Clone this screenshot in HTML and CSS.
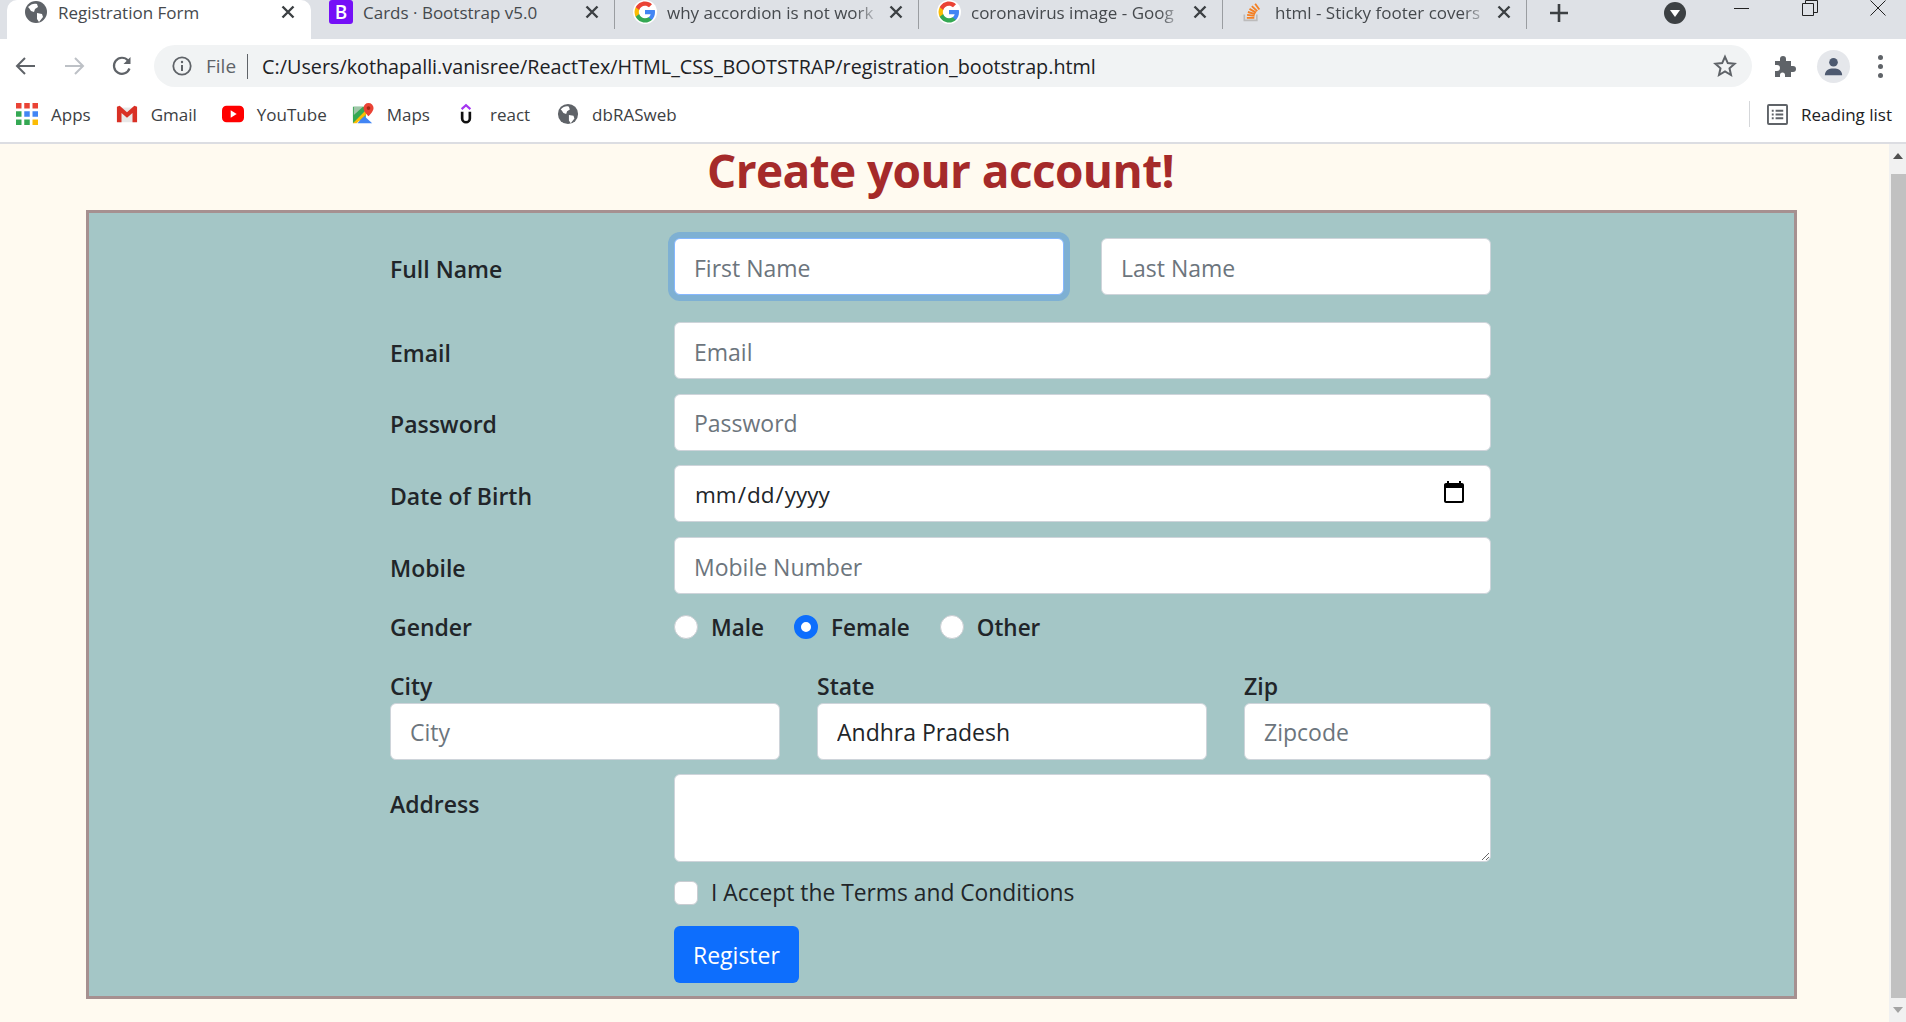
FILE: index.html
```html
<!DOCTYPE html>
<html lang="en">
  <head>
    <meta charset="UTF-8" />
    <meta name="viewport" content="width=device-width, initial-scale=1.0" />
    <title>Registration Form</title>
    <link rel="stylesheet" href="styles.css">
  </head>
  <body>
    <svg class="sprites" width="0" height="0">
      <symbol id="globe" viewBox="0 0 24 24">
        <circle cx="12" cy="12" r="11" fill="#5f6368" />
        <path d="M4 7c3-3 6-4 9-3l1 3-3 2-1 3-3-1-2-3zM13 13l5 1 1 3-4 5-2-3z" fill="#fff" />
      </symbol>
      <symbol id="google" viewBox="0 0 48 48">
        <circle cx="24" cy="24" r="24" fill="#fff" />
        <path fill="#4285f4" d="M44 24.500c0-1.500-.1-2.900-.4-4.300H24v8.100h11.200c-.5 2.600-2 4.800-4.200 6.300v5.200h6.800c4-3.700 6.200-9.100 6.200-15.300z" />
        <path fill="#34a853" d="M24 45c5.700 0 10.400-1.900 13.800-5.100L31 34.600c-1.900 1.300-4.300 2-7 2-5.400 0-10-3.600-11.600-8.500H5.400v5.400C8.800 40.300 15.800 45 24 45z" />
        <path fill="#fbbc05" d="M12.400 28.100c-.4-1.300-.7-2.600-.7-4.100s.3-2.800.7-4.100v-5.400H5.400C4 17.300 3 20.500 3 24s1 6.700 2.400 9.500z" />
        <path fill="#ea4335" d="M24 11.400c3.100 0 5.800 1.100 8 3.100l6-6C34.400 5.100 29.700 3 24 3 15.800 3 8.800 7.700 5.400 14.500l7 5.400c1.600-4.900 6.200-8.500 11.600-8.500z" />
      </symbol>
      <symbol id="close" viewBox="0 0 14 14">
        <path d="M1.500 1.500l11 11M12.500 1.500l-11 11" stroke="#3c4043" stroke-width="2.400" />
      </symbol>
    </svg>

    <div class="browser">
      <!-- Tabs -->
      <div class="tabstrip">
        <div class="tab tab-active">
          <svg class="favicon"><use href="#globe" /></svg>
          <span class="tab-title">Registration Form</span>
          <svg class="tab-close"><use href="#close" /></svg>
        </div>
        <div class="tab">
          <span class="favicon bs-icon">B</span>
          <span class="tab-title">Cards · Bootstrap v5.0</span>
          <svg class="tab-close"><use href="#close" /></svg>
        </div>
        <div class="tab">
          <svg class="favicon"><use href="#google" /></svg>
          <span class="tab-title tab-fade">why accordion is not work</span>
          <svg class="tab-close"><use href="#close" /></svg>
        </div>
        <div class="tab">
          <svg class="favicon"><use href="#google" /></svg>
          <span class="tab-title tab-fade">coronavirus image - Goog</span>
          <svg class="tab-close"><use href="#close" /></svg>
        </div>
        <div class="tab tab-so">
          <svg class="favicon favicon-so" viewBox="0 0 24 24">
            <path d="M4 15v7h15v-7" fill="none" stroke="#bcbbbb" stroke-width="2" />
            <path d="M7 19h9M7.300 15.500l9 1.200M8.300 12l8.600 2.600M10.200 8.200l7.800 4.500M13 5l6.500 6M17 2l5 7" fill="none" stroke="#f48024" stroke-width="2.200" />
          </svg>
          <span class="tab-title tab-fade">html - Sticky footer covers</span>
          <svg class="tab-close"><use href="#close" /></svg>
        </div>
        <svg class="new-tab" viewBox="0 0 20 20"><path d="M10 1v18M1 10h18" stroke="#3c4043" stroke-width="2.600" /></svg>
        <svg class="tab-search" viewBox="0 0 22 22">
          <circle cx="11" cy="11" r="11" fill="#3c4043" />
          <path d="M6 8h10l-5 7z" fill="#fff" />
        </svg>
        <div class="window-controls">
          <svg viewBox="0 0 16 16"><path d="M0 8.500h15" stroke="#222" /></svg>
          <svg viewBox="0 0 16 16"><path d="M.5 3.500h11v12H.5zM3.500 3.500v-3h12v12h-4" fill="none" stroke="#222" /></svg>
          <svg viewBox="0 0 16 16"><path d="M.5.500l15 15M15.500.500l-15 15" stroke="#222" /></svg>
        </div>
      </div>

      <!-- Address bar -->
      <div class="toolbar">
        <svg class="nav-icon" viewBox="0 0 24 24"><path d="M21 12H4M11 4l-8 8 8 8" fill="none" stroke="#5f6368" stroke-width="2" /></svg>
        <svg class="nav-icon" viewBox="0 0 24 24"><path d="M3 12h17M13 4l8 8-8 8" fill="none" stroke="#bdc1c6" stroke-width="2" /></svg>
        <svg class="nav-icon" viewBox="0 0 24 24"><path d="M19.500 14.500A8 8 0 1 1 18 6.500" fill="none" stroke="#5f6368" stroke-width="2.200" /><path d="M20.500 3v7h-7z" fill="#5f6368" /></svg>
        <div class="omnibox">
          <svg class="info-icon" viewBox="0 0 20 20">
            <circle cx="10" cy="10" r="8.700" fill="none" stroke="#5f6368" stroke-width="1.800" />
            <path d="M10 9v6" stroke="#5f6368" stroke-width="2" />
            <circle cx="10" cy="6" r="1.200" fill="#5f6368" />
          </svg>
          <span class="omni-scheme">File</span>
          <span class="omni-divider"></span>
          <span class="omni-url">C:/Users/kothapalli.vanisree/ReactTex/HTML_CSS_BOOTSTRAP/registration_bootstrap.html</span>
          <svg class="star-icon" viewBox="0 0 24 24"><path d="M12 2.800l2.800 6.300 6.800.7-5.100 4.500 1.500 6.700-6-3.500-6 3.500 1.500-6.700-5.100-4.500 6.800-.7z" fill="none" stroke="#5f6368" stroke-width="2" /></svg>
        </div>
        <svg class="puzzle-icon" viewBox="0 0 24 24"><path d="M3 7h5V5a3 3 0 0 1 6 0v2h5v5h2a3 3 0 0 1 0 6h-2v5h-6v-2a2.500 2.500 0 0 0-5 0v2H3v-6h2a3 3 0 0 0 0-6H3z" fill="#5f6368" /></svg>
        <div class="avatar">
          <svg viewBox="0 0 24 24"><circle cx="12" cy="7.500" r="4.500" fill="#4e5a70" /><path d="M3 21c0-5 4-7 9-7s9 2 9 7z" fill="#4e5a70" /></svg>
        </div>
        <div class="kebab"><i></i><i></i><i></i></div>
      </div>

      <!-- Bookmarks -->
      <div class="bookmarks">
        <div class="bookmark">
          <svg class="bm-icon" viewBox="0 0 20 20">
            <path fill="#ea4335" d="M0 0h5v5H0zM7.500 0h5v5h-5zM15 0h5v5h-5z" />
            <path fill="#4285f4" d="M7.500 7.500h5v5h-5zM15 7.500h5v5h-5z" />
            <path fill="#34a853" d="M0 7.500h5v5H0zM0 15h5v5H0zM7.500 15h5v5h-5z" />
            <path fill="#fbbc05" d="M15 15h5v5h-5z" />
          </svg>
          <span>Apps</span>
        </div>
        <div class="bookmark">
          <svg class="bm-icon" viewBox="0 0 24 20">
            <path fill="#e8e8e8" d="M3 3h18v16H3z" />
            <path fill="#d93025" d="M1 2l3-1 8 7 8-7 3 1v17h-5V9l-6 5-6-5v10H1z" />
          </svg>
          <span>Gmail</span>
        </div>
        <div class="bookmark">
          <svg class="bm-icon" viewBox="0 0 24 18">
            <rect width="24" height="18" rx="5" fill="#f00" />
            <path d="M9.500 5l6.500 4-6.500 4z" fill="#fff" />
          </svg>
          <span>YouTube</span>
        </div>
        <div class="bookmark">
          <svg class="bm-icon" viewBox="0 0 24 24">
            <path fill="#34a853" d="M1 4h14v12L1 22z" />
            <path fill="#4285f4" d="M6 22l7-8 9 8z" />
            <path fill="#fbbc05" d="M1 22L15 8l2 3L5 22z" />
            <path fill="#9fc5a8" d="M2 4h10L2 13z" />
            <path fill="#ea4335" d="M18 0a5.500 5.500 0 0 1 5.500 5.500c0 4-5.500 9-5.500 9s-5.500-5-5.500-9A5.500 5.500 0 0 1 18 0z" />
            <circle cx="18" cy="5.500" r="2" fill="#a52714" />
          </svg>
          <span>Maps</span>
        </div>
        <div class="bookmark bookmark-wide">
          <svg class="bm-icon" viewBox="0 0 12 20">
            <path d="M2 5.500L6 2l4 3.500" fill="none" stroke="#a435f0" stroke-width="2" />
            <path d="M2.500 8v6a3.500 3.500 0 0 0 7 0V8" fill="none" stroke="#111" stroke-width="2.400" />
          </svg>
          <span>react</span>
        </div>
        <div class="bookmark">
          <svg class="bm-icon"><use href="#globe" /></svg>
          <span>dbRASweb</span>
        </div>
        <div class="reading-list">
          <svg class="list-icon" viewBox="0 0 22 22">
            <rect x="1" y="1" width="20" height="20" rx="1" fill="none" stroke="#5f6368" stroke-width="2" />
            <path d="M5 7h2M9 7h8M5 11h2M9 11h8M5 15h2M9 15h8" stroke="#5f6368" stroke-width="2" />
          </svg>
          <span>Reading list</span>
        </div>
      </div>

      <!-- Page -->
      <div class="viewport">
        <main class="page">
          <h1 class="page-title">Create your account!</h1>
          <form class="signup-panel">
            <div class="form-row row-name">
              <label class="row-label" for="firstName">Full Name</label>
              <div class="row-fields">
                <input class="field field-focus" type="text" id="firstName" placeholder="First Name" />
                <input class="field" type="text" id="lastName" placeholder="Last Name" />
              </div>
            </div>

            <div class="form-row">
              <label class="row-label" for="email">Email</label>
              <input class="field" type="email" id="email" placeholder="Email" />
            </div>

            <div class="form-row">
              <label class="row-label" for="password">Password</label>
              <input class="field" type="password" id="password" placeholder="Password" />
            </div>

            <div class="form-row">
              <label class="row-label" for="dob">Date of Birth</label>
              <input class="field" type="date" id="dob" />
            </div>

            <div class="form-row">
              <label class="row-label" for="mobile">Mobile</label>
              <input class="field" type="tel" id="mobile" placeholder="Mobile Number" />
            </div>

            <div class="form-row row-gender">
              <span class="row-label">Gender</span>
              <div class="radio-group">
                <label class="choice"><input class="radio" type="radio" name="gender" />Male</label>
                <label class="choice"><input class="radio" type="radio" name="gender" checked />Female</label>
                <label class="choice"><input class="radio" type="radio" name="gender" />Other</label>
              </div>
            </div>

            <div class="location-row">
              <div class="location-col">
                <label class="col-label" for="city">City</label>
                <input class="field" type="text" id="city" placeholder="City" />
              </div>
              <div class="location-col">
                <label class="col-label" for="state">State</label>
                <input class="field field-value" type="text" id="state" value="Andhra Pradesh" />
              </div>
              <div class="location-col col-zip">
                <label class="col-label" for="zip">Zip</label>
                <input class="field" type="text" id="zip" placeholder="Zipcode" />
              </div>
            </div>

            <div class="form-row row-address">
              <label class="row-label" for="address">Address</label>
              <textarea class="field field-area" id="address"></textarea>
            </div>

            <div class="form-row row-terms">
              <span class="row-label"></span>
              <label class="choice choice-light"><input class="checkbox" type="checkbox" />I Accept the Terms and Conditions</label>
            </div>

            <div class="form-row row-submit">
              <span class="row-label"></span>
              <button class="btn-register" type="submit">Register</button>
            </div>
          </form>
        </main>
        <div class="scrollbar">
          <div class="scroll-up"></div>
          <div class="scroll-thumb"></div>
          <div class="scroll-down"></div>
        </div>
      </div>
    </div>
  </body>
</html>
```

FILE: styles.css
```css
* {
  box-sizing: border-box;
}
html,
body {
  margin: 0;
  padding: 0;
  height: 100%;
  overflow: hidden;
}
body {
  font-family: "Open Sans", "Noto Sans", sans-serif;
  color: #212529;
}
.sprites {
  display: block;
  height: 0;
}
.browser {
  display: flex;
  flex-direction: column;
  height: 1022px;
}

/* Tabs */
.tabstrip {
  display: flex;
  align-items: flex-start;
  height: 39px;
  padding-left: 7px;
  background-color: #dee1e6;
  flex: none;
}
.tab {
  display: flex;
  align-items: center;
  width: 304px;
  height: 39px;
  padding: 0 16px 15px 18px;
  font-size: 17px;
  color: #45494d;
  position: relative;
}
.tab::after {
  content: "";
  position: absolute;
  top: 0;
  right: 0;
  width: 1px;
  height: 29px;
  background-color: #9a9da1;
}
.tab-active {
  padding-left: 17px;
  background-color: #fff;
  border-radius: 10px 10px 0 0;
}
.tab-active::after {
  display: none;
}
.favicon {
  display: block;
  width: 24px;
  height: 24px;
  flex: none;
}
.favicon-so {
  width: 20px;
}
.bs-icon {
  background-color: #7510f7;
  color: #fff;
  font-size: 19px;
  font-weight: 600;
  line-height: 24px;
  text-align: center;
  border-radius: 3px;
}
.tab-title {
  flex: 1;
  margin-left: 10px;
  white-space: nowrap;
  overflow: hidden;
}
.tab-so .tab-title {
  margin-left: 14px;
}
.tab-fade {
  -webkit-mask-image: linear-gradient(to right, #000 88%, transparent);
  mask-image: linear-gradient(to right, #000 88%, transparent);
}
.tab-close {
  display: block;
  width: 14px;
  height: 14px;
  margin-left: 8px;
  flex: none;
}
.new-tab {
  width: 20px;
  height: 20px;
  margin: 3px 0 0 22px;
  flex: none;
}
.tab-search {
  width: 22px;
  height: 22px;
  margin: 2px 0 0 95px;
  flex: none;
}
.window-controls {
  display: flex;
  gap: 52px;
  margin-left: 48px;
}
.window-controls svg {
  width: 16px;
  height: 16px;
  display: block;
}

/* Address bar */
.toolbar {
  display: flex;
  align-items: center;
  height: 59px;
  padding: 6px 0 11px 14px;
  background-color: #fff;
  flex: none;
}
.nav-icon {
  width: 24px;
  height: 24px;
  margin-right: 24px;
  flex: none;
}
.nav-icon:nth-child(3) {
  margin-right: 20px;
}
.omnibox {
  display: flex;
  align-items: center;
  width: 1598px;
  height: 42px;
  padding: 0 15px 0 18px;
  background-color: #f1f3f4;
  border-radius: 21px;
  flex: none;
}
.info-icon {
  width: 20px;
  height: 20px;
  flex: none;
}
.omni-scheme {
  margin-left: 14px;
  font-size: 19px;
  color: #5f6368;
}
.omni-divider {
  width: 1px;
  height: 25px;
  margin: 0 14px 0 11px;
  background-color: #5f6368;
}
.omni-url {
  flex: 1;
  font-size: 19.780px;
  color: #202124;
  white-space: nowrap;
}
.star-icon {
  width: 24px;
  height: 24px;
  flex: none;
}
.puzzle-icon {
  width: 24px;
  height: 24px;
  margin-left: 20px;
  flex: none;
}
.avatar {
  width: 33px;
  height: 33px;
  margin-left: 21px;
  padding: 5px;
  background-color: #e5e7eb;
  border-radius: 50%;
  flex: none;
}
.avatar svg {
  display: block;
}
.kebab {
  display: flex;
  flex-direction: column;
  gap: 4px;
  margin-left: 28px;
}
.kebab i {
  width: 5px;
  height: 5px;
  background-color: #5f6368;
  border-radius: 50%;
}

/* Bookmarks */
.bookmarks {
  display: flex;
  align-items: center;
  height: 46px;
  padding: 0 14px 12px 16px;
  background-color: #fff;
  border-bottom: 2px solid #dcdde2;
  font-size: 17px;
  color: #3c4043;
  flex: none;
}
.bookmark {
  display: flex;
  align-items: center;
  gap: 13px;
  margin-right: 25px;
}
.bookmark-wide {
  margin-right: 27px;
}
.bm-icon {
  display: block;
  width: 22px;
  height: 22px;
  flex: none;
}
.reading-list {
  display: flex;
  align-items: center;
  gap: 13px;
  height: 26px;
  margin-left: auto;
  padding-left: 17px;
  border-left: 1px solid #d5d7da;
  color: #202124;
}
.list-icon {
  width: 21px;
  height: 21px;
  display: block;
}

/* Page */
.viewport {
  display: flex;
  flex: 1;
  min-height: 0;
}
.page {
  flex: 1;
  padding: 0 92px 0 86px;
  background-color: #fffaf0;
}
.page-title {
  margin: 0;
  height: 66px;
  font-size: 46px;
  font-weight: 700;
  letter-spacing: -0.6px;
  line-height: 52px;
  padding-right: 2px;
  color: #a52a2a;
  text-align: center;
}
.signup-panel {
  height: 789px;
  padding: 25px 303px 0 301px;
  background-color: #a4c6c6;
  border: 3px solid #a69090;
}
.form-row {
  display: flex;
  align-items: center;
  margin-bottom: 14.700px;
}
.row-label {
  width: 284px;
  padding-top: 4px;
  font-size: 23px;
  font-weight: 600;
  flex: none;
}
.row-fields {
  display: flex;
  gap: 37px;
  flex: 1;
}
.field {
  display: block;
  width: 100%;
  height: 57px;
  padding: 10px 19px 8px;
  font-family: inherit;
  font-size: 23px;
  color: #212529;
  background-color: #fff;
  border: 1px solid #ced4da;
  border-radius: 6px;
  outline: none;
}
.field::placeholder {
  color: #6c757d;
}
.field::-webkit-datetime-edit {
  font-size: 22.500px;
  padding: 0;
}
.field::-webkit-calendar-picker-indicator {
  width: 26px;
  height: 26px;
  padding: 0;
  margin-right: 4px;
  margin-top: -3px;
}
.field-focus {
  border-color: #86b7fe;
  box-shadow: 0 0 0 6px rgba(13, 110, 253, 0.25);
}
.row-name {
  margin-bottom: 27px;
}
.row-gender {
  height: 37px;
  margin-bottom: 0;
}
.row-gender .row-label {
  padding-top: 0;
}
.radio-group {
  display: flex;
  gap: 30px;
}
.choice {
  display: flex;
  align-items: center;
  gap: 13px;
  font-size: 22.500px;
  font-weight: 600;
}
.choice-light {
  font-size: 22.800px;
  font-weight: 400;
}
.radio,
.checkbox {
  appearance: none;
  width: 24px;
  height: 24px;
  margin: 0;
  background-color: #fff;
  border: 1px solid #c9cdd2;
  flex: none;
}
.radio {
  border-radius: 50%;
}
.radio:checked {
  background-color: #fff;
  border: 7px solid #0d6efd;
}
.checkbox {
  border-radius: 6px;
}
.location-row {
  display: flex;
  gap: 37px;
  margin-top: 26px;
  margin-bottom: 14px;
}
.location-col {
  width: 390px;
  flex: none;
}
.col-zip {
  width: auto;
  flex: 1;
}
.col-label {
  display: block;
  height: 31px;
  font-size: 23px;
  font-weight: 600;
  line-height: 29px;
}
.row-address {
  align-items: flex-start;
  margin-bottom: 14px;
}
.row-address .row-label {
  padding-top: 14px;
}
.field-area {
  height: 88px;
  resize: vertical;
}
.row-terms {
  height: 34px;
  margin-bottom: 16px;
}
.btn-register {
  height: 57px;
  padding: 2px 19px 0;
  font-family: inherit;
  font-size: 23px;
  color: #fff;
  background-color: #0d6efd;
  border: none;
  border-radius: 6px;
  cursor: pointer;
}

/* Scrollbar */
.scrollbar {
  display: flex;
  flex-direction: column;
  width: 17px;
  background-color: #f1f1f1;
  flex: none;
}
.scroll-up,
.scroll-down {
  height: 24px;
  position: relative;
  flex: none;
}
.scroll-up::after,
.scroll-down::after {
  content: "";
  position: absolute;
  left: 4px;
  border-left: 5px solid transparent;
  border-right: 5px solid transparent;
}
.scroll-up::after {
  top: 9px;
  border-bottom: 6px solid #505050;
}
.scroll-down::after {
  top: 9px;
  border-top: 6px solid #a3a3a3;
}
.scroll-up {
  height: 30px;
}
.scroll-thumb {
  flex: 1;
  margin-left: 2px;
  background-color: #c1c1c1;
}
```
